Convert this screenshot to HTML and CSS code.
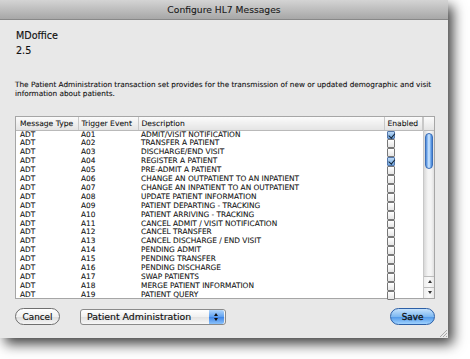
FILE: index.html
```html
<!DOCTYPE html>
<html lang="en">
<head>
	<meta charset="UTF-8">
	<meta name="viewport" content="width=device-width, initial-scale=1.0">
	<link rel="stylesheet" href="styles.css">
	<title>Configure HL7 Messages</title>
</head>
<body>
	<div class="window">
		<div class="titlebar">Configure HL7 Messages</div>
		<div class="content">
			<p class="app-name">MDoffice</p>
			<p class="version">2.5</p>
			<p class="desc">The Patient Administration transaction set provides for the transmission of new or updated demographic and visit information about patients.</p>

			<div class="list">
				<table>
					<thead>
						<tr>
							<th class="c-type">Message Type</th>
							<th class="c-event">Trigger Event</th>
							<th class="c-desc">Description</th>
							<th class="c-enabled">Enabled</th>
						</tr>
					</thead>
					<tbody>
						<tr><td>ADT</td><td>A01</td><td>ADMIT/VISIT NOTIFICATION</td><td><span class="check on"></span></td></tr>
						<tr><td>ADT</td><td>A02</td><td>TRANSFER A PATIENT</td><td><span class="check"></span></td></tr>
						<tr><td>ADT</td><td>A03</td><td>DISCHARGE/END VISIT</td><td><span class="check"></span></td></tr>
						<tr><td>ADT</td><td>A04</td><td>REGISTER A PATIENT</td><td><span class="check on"></span></td></tr>
						<tr><td>ADT</td><td>A05</td><td>PRE-ADMIT A PATIENT</td><td><span class="check"></span></td></tr>
						<tr><td>ADT</td><td>A06</td><td>CHANGE AN OUTPATIENT TO AN INPATIENT</td><td><span class="check"></span></td></tr>
						<tr><td>ADT</td><td>A07</td><td>CHANGE AN INPATIENT TO AN OUTPATIENT</td><td><span class="check"></span></td></tr>
						<tr><td>ADT</td><td>A08</td><td>UPDATE PATIENT INFORMATION</td><td><span class="check"></span></td></tr>
						<tr><td>ADT</td><td>A09</td><td>PATIENT DEPARTING - TRACKING</td><td><span class="check"></span></td></tr>
						<tr><td>ADT</td><td>A10</td><td>PATIENT ARRIVING - TRACKING</td><td><span class="check"></span></td></tr>
						<tr><td>ADT</td><td>A11</td><td>CANCEL ADMIT / VISIT NOTIFICATION</td><td><span class="check"></span></td></tr>
						<tr><td>ADT</td><td>A12</td><td>CANCEL TRANSFER</td><td><span class="check"></span></td></tr>
						<tr><td>ADT</td><td>A13</td><td>CANCEL DISCHARGE / END VISIT</td><td><span class="check"></span></td></tr>
						<tr><td>ADT</td><td>A14</td><td>PENDING ADMIT</td><td><span class="check"></span></td></tr>
						<tr><td>ADT</td><td>A15</td><td>PENDING TRANSFER</td><td><span class="check"></span></td></tr>
						<tr><td>ADT</td><td>A16</td><td>PENDING DISCHARGE</td><td><span class="check"></span></td></tr>
						<tr><td>ADT</td><td>A17</td><td>SWAP PATIENTS</td><td><span class="check"></span></td></tr>
						<tr><td>ADT</td><td>A18</td><td>MERGE PATIENT INFORMATION</td><td><span class="check"></span></td></tr>
						<tr><td>ADT</td><td>A19</td><td>PATIENT QUERY</td><td><span class="check"></span></td></tr>
					</tbody>
				</table>
				<div class="scroll-col">
					<div class="scroll-head"></div>
					<div class="scroll-track">
						<div class="thumb"></div>
					</div>
					<div class="arrow up"></div>
					<div class="arrow down"></div>
				</div>
			</div>

			<div class="buttons">
				<button class="btn cancel">Cancel</button>
				<div class="popup">
					<span>Patient Administration</span>
					<span class="stepper"></span>
				</div>
				<button class="btn save">Save</button>
			</div>
		</div>
		<div class="grip">
			<svg width="8" height="8" viewBox="0 0 8 8">
				<path d="M1 8 L8 1 M4 8 L8 4 M7 8 L8 7" stroke="#999" stroke-width="0.8"/>
			</svg>
		</div>
	</div>
</body>
</html>
```

FILE: styles.css
```css
*{
	padding: 0;
	margin: 0;
	box-sizing: border-box;
	font-family: "DejaVu Sans", "Liberation Sans", sans-serif;
}
body{
	width: 470px;
	height: 359px;
	background-color: #fff;
	overflow: hidden;
}
.window{
	position: relative;
	width: 448px;
	height: 338px;
	background-color: #e8e8e8;
	display: flex;
	flex-direction: column;
	box-shadow: 5px 6px 12px rgba(0, 0, 0, .75);
}
.titlebar{
	height: 20px;
	flex-shrink: 0;
	background: linear-gradient(#d4d4d4, #a7a7a7);
	border-bottom: 1px solid #888;
	color: #1a1a1a;
	font-size: 9.2px;
	text-align: center;
	line-height: 20px;
	-webkit-text-stroke: 0.1px #1a1a1a;
}
.content{
	flex: 1;
	display: flex;
	flex-direction: column;
	padding: 8px 13px 0 15px;
}
.app-name,
.version{
	font-size: 9.6px;
	line-height: 15px;
	margin-left: 1px;
	color: #111;
	-webkit-text-stroke: 0.15px #111;
}
.desc{
	margin-top: 22px;
	margin-right: -12px;
	font-size: 7.3px;
	line-height: 9px;
	color: #111;
	-webkit-text-stroke: 0.1px #111;
}
.list{
	margin-top: 18px;
	height: 183px;
	display: flex;
	border: 1px solid #a6a6a6;
	background-color: #fff;
}
table{
	width: 406px;
	border-collapse: collapse;
	table-layout: fixed;
	font-size: 7.4px;
	color: #111;
	-webkit-text-stroke: 0.08px #111;
}
thead th{
	height: 13px;
	font-weight: normal;
	text-align: left;
	background: linear-gradient(#fbfbfb, #e4e4e4);
	border-bottom: 1px solid #b9b9b9;
	border-right: 1px solid #c8c8c8;
	padding-left: 3px;
	font-size: 7.6px;
}
.c-type{ width: 62px; padding-left: 4px; }
.c-event{ width: 60px; }
.c-desc{ width: 246px; }
.c-enabled{ width: 38px; }
tbody td{
	height: 8.9px;
	line-height: 8.9px;
	padding-left: 3px;
	white-space: nowrap;
	overflow: hidden;
}
tbody td:first-child{
	padding-left: 4px;
}
tbody td:last-child{
	padding-left: 3px;
}
.check{
	display: block;
	width: 8px;
	height: 8.9px;
	border: 1px solid #777;
	border-radius: 1px;
	background: linear-gradient(#fff, #e6e6e6);
}
.check.on{
	position: relative;
	background: linear-gradient(#bcd9f5, #6fa6e0);
	border-color: #5577aa;
}
.check.on::after{
	content: "";
	position: absolute;
	left: 1.5px;
	top: 0px;
	width: 2.5px;
	height: 4.5px;
	border-right: 1.3px solid #123;
	border-bottom: 1.3px solid #123;
	transform: rotate(40deg);
}
.scroll-col{
	flex: 1;
	display: flex;
	flex-direction: column;
	border-left: 1px solid #c8c8c8;
}
.scroll-head{
	height: 14px;
	background: linear-gradient(#fbfbfb, #e4e4e4);
	border-bottom: 1px solid #b9b9b9;
}
.scroll-track{
	flex: 1;
	background: linear-gradient(90deg, #d8d8d8, #f4f4f4 40%, #f4f4f4 70%, #e0e0e0);
	padding: 2px 1px;
}
.thumb{
	height: 36px;
	border-radius: 5px;
	border: 1px solid #3b6fb8;
	background: linear-gradient(90deg, #4a86d8, #a9d0fb 35%, #d7ecff 50%, #7cb1ee 75%, #3f7dd4);
}
.arrow{
	height: 11px;
	position: relative;
	border-top: 1px solid #bcbcbc;
	background: linear-gradient(90deg, #eee, #fafafa 50%, #e8e8e8);
}
.arrow::after{
	content: "";
	position: absolute;
	left: 4px;
	top: 3px;
	border-left: 2px solid transparent;
	border-right: 2px solid transparent;
}
.arrow.up::after{
	border-bottom: 3px solid #333;
}
.arrow.down::after{
	border-top: 3px solid #333;
}
.buttons{
	margin-top: 9px;
	display: flex;
	align-items: center;
	gap: 20px;
}
.btn{
	height: 17px;
	width: 45px;
	border-radius: 9px;
	font-size: 8.8px;
	color: #111;
	cursor: pointer;
	-webkit-text-stroke: 0.15px #111;
}
.cancel{
	border: 1px solid #6f6f6f;
	background: linear-gradient(#ffffff, #f1f1f1 50%, #dcdcdc 51%, #f5f5f5);
}
.save{
	margin-left: auto;
	border: 1px solid #2c5fa6;
	background: linear-gradient(#c5e2fc, #7fb9f1 50%, #4d95e6 51%, #9fd2ff);
	-webkit-text-stroke: 0.3px #111;
}
.popup{
	width: 146px;
	height: 16px;
	display: flex;
	align-items: center;
	justify-content: space-between;
	padding-left: 6px;
	border: 1px solid #8a8a8a;
	border-radius: 3px;
	background: linear-gradient(#ffffff, #f0f0f0 50%, #e2e2e2 51%, #f7f7f7);
	font-size: 9.4px;
	color: #111;
	-webkit-text-stroke: 0.15px #111;
}
.stepper{
	position: relative;
	width: 15px;
	height: 14px;
	margin-right: 1px;
	border-radius: 0 2px 2px 0;
	background: linear-gradient(#b2d6fa, #5c9ff0 50%, #3d84e6 51%, #8bc2fb);
}
.stepper::before,
.stepper::after{
	content: "";
	position: absolute;
	left: 5px;
	border-left: 2px solid transparent;
	border-right: 2px solid transparent;
}
.stepper::before{
	top: 3px;
	border-bottom: 3px solid #111;
}
.stepper::after{
	top: 8px;
	border-top: 3px solid #111;
}
.grip{
	position: absolute;
	right: 1px;
	bottom: 1px;
	width: 8px;
	height: 8px;
	display: flex;
}
```
